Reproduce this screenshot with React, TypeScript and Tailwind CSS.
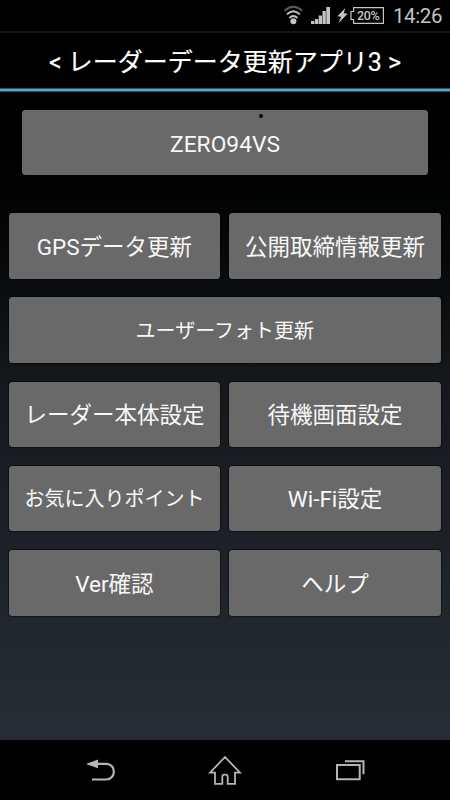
import React from "react";

const font = "font-['Roboto','Noto_Sans_CJK_JP',sans-serif]";

function MenuButton({ label, className = "pt-[2.2px]" }: { label: string; className?: string }) {
  return (
    <button
      className={`flex items-center justify-center whitespace-nowrap rounded-[3.5px] bg-[#696969] leading-none text-[#f8f8f8] shadow-[0_0_1px_1px_rgba(0,0,0,0.45)] ${className}`}
    >
      {label}
    </button>
  );
}

function StatusBar() {
  return (
    <div className="flex h-[31px] items-center bg-black pl-[284px] text-[#c4c4c4]">
      <svg width="19" height="31" viewBox="0 0 19 31" fill="none" stroke="currentColor" strokeWidth="1.8">
        <path d="M.5 10.8Q9.4 2.8 18.3 10.8" stroke="#5c5c5c" />
        <path d="M2.9 14.4Q9.4 8 15.9 14.4" />
        <path d="M5.4 18Q9.4 14 13.4 18" />
        <circle cx="9.4" cy="21.3" r="3" fill="currentColor" stroke="none" />
      </svg>
      <svg className="ml-[8px]" width="19" height="31" viewBox="0 0 19 31" fill="currentColor">
        <path d="M0 21h3.4v3H0zM3.9 19h3.3v5H3.9zM7.7 15.5H11V24H7.7zM11.5 11h3.3v13h-3.3zM15.3 7H19v17h-3.7z" />
      </svg>
      <svg className="ml-[7px]" width="11" height="31" viewBox="0 0 11 31" fill="currentColor">
        <path d="M8.3 8 .4 16.3l3.7.4-2.7 6.6L10.6 13.7l-3.9-.4z" />
      </svg>
      <div className="relative ml-[2px] h-[31px] w-[34px]">
        <svg className="absolute inset-0" width="34" height="31" viewBox="0 0 34 31" fill="none" stroke="currentColor" strokeWidth="1.2">
          <path d="M3.6 7.6h29.8v15.8H3.6v-3.9H1v-8h2.6z" />
        </svg>
        <span className="absolute left-[7px] top-[8.5px] text-[12.5px] font-medium leading-[14px] tracking-[-0.3px]">20%</span>
      </div>
      <span className="ml-[9px] mt-[1px] text-[20.5px] leading-none tracking-[-0.4px]">14:26</span>
    </div>
  );
}

function NavigationBar() {
  return (
    <div className="flex h-[60px] items-center bg-black pl-[85px] text-[#b5b5b5]">
      <svg width="32" height="60" viewBox="0 0 32 60" fill="none">
        <path d="M11 23.9h10.2c10.2 0 10.2 15.6 0 15.6H7" stroke="currentColor" strokeWidth="2.2" />
        <path d="M1 23.9 13 19.4v8.8z" fill="currentColor" />
      </svg>
      <svg className="ml-[91px]" width="34" height="60" viewBox="0 0 34 60" fill="none" stroke="currentColor" strokeWidth="1.8">
        <path d="M17 17 32 32.6h-5v11.2h-7.3v-7.1q0-2-2.1-2h-1.2q-2.1 0-2.1 2v7.1H7V32.6H2z" />
      </svg>
      <svg className="ml-[93px]" width="30" height="60" viewBox="0 0 30 60" fill="none" stroke="currentColor" strokeWidth="2">
        <path d="M2 25h22.7v14.2H2zM10 21.2h18.5v13" />
      </svg>
    </div>
  );
}

export default function App() {
  return (
    <main className={`flex h-[800px] w-[450px] flex-col overflow-hidden bg-black ${font}`}>
      <StatusBar />
      <section className="flex h-[709px] flex-col bg-linear-to-b from-black via-[#15191d] via-50% to-[#282d35]">
        <header className="h-[61px] border-t-2 border-b border-t-[#171717] border-b-[#28516a] bg-black">
          <h1 className="flex h-[58px] items-center justify-center whitespace-pre border-b-2 border-[#57a5cd] pt-[2px] text-[25px] font-normal leading-none text-white [-webkit-text-stroke:0.15px_white] shadow-[inset_0_-1px_0_#28516a]">
            {"< レーダーデータ更新アプリ3 >"}
          </h1>
        </header>
        <div className="relative mx-[22px] mt-[18px] flex flex-col">
          <MenuButton label="ZERO94VS" className="h-[65px] pt-[5px] text-[22.8px]" />
          <span className="absolute left-[237px] top-[4px] size-[4px] rounded-full bg-black" />
        </div>
        <div className="mr-[9px] ml-[8.5px] mt-[38.3px] grid auto-rows-[65.5px] grid-cols-2 gap-x-[8.8px] gap-y-[18.7px] text-[22.5px]">
          <MenuButton label="GPSデータ更新" />
          <MenuButton label="公開取締情報更新" />
          <MenuButton label="ユーザーフォト更新" className="col-span-2 pt-px text-[20px]" />
          <MenuButton label="レーダー本体設定" />
          <MenuButton label="待機画面設定" />
          <MenuButton label="お気に入りポイント" className="pt-px text-[20px]" />
          <MenuButton label="Wi-Fi設定" />
          <MenuButton label="Ver確認" />
          <MenuButton label="ヘルプ" />
        </div>
      </section>
      <NavigationBar />
    </main>
  );
}
